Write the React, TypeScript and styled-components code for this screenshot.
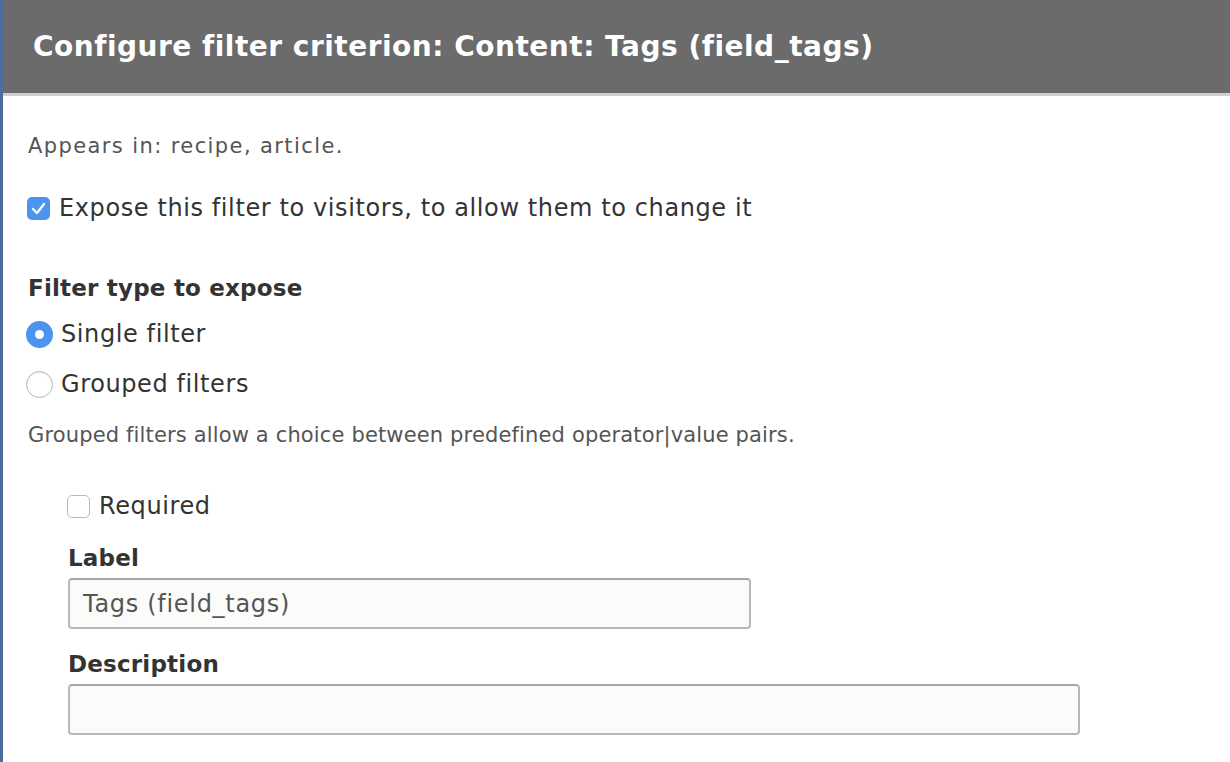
import React from 'react';
import styled, { createGlobalStyle } from 'styled-components';

const GlobalStyle = createGlobalStyle`
  html, body {
    margin: 0;
    padding: 0;
    background: #ffffff;
  }
  body {
    font-family: "DejaVu Sans", Verdana, sans-serif;
    color: #333333;
  }
`;

const Frame = styled.div`
  width: 1230px;
  height: 762px;
  overflow: hidden;
  border-left: 3px solid #4d6d9e;
  box-sizing: border-box;
  background: #ffffff;
`;

const TitleBar = styled.div`
  height: 93px;
  background: #6b6b6b;
  border-bottom: 3px solid #cfcfcf;
  display: flex;
  align-items: center;
  padding-left: 30px;
`;

const Title = styled.h1`
  margin: 0;
  color: #ffffff;
  font-size: 28px;
  font-weight: bold;
  letter-spacing: 0.5px;
`;

const Body = styled.div`
  padding: 36px 0 0 25px;
  display: flex;
  flex-direction: column;
`;

const Note = styled.div<{ $top?: number; $spacing?: number }>`
  font-size: 21px;
  color: #555555;
  letter-spacing: ${p => p.$spacing ?? 0.15}px;
  margin-top: ${p => p.$top ?? 0}px;
  line-height: 28px;
`;

const OptionRow = styled.label<{ $top?: number }>`
  display: flex;
  align-items: center;
  gap: 9px;
  font-size: 24px;
  letter-spacing: 0.6px;
  color: #333333;
  line-height: 30px;
  margin-top: ${p => p.$top ?? 0}px;
`;

const Box = styled.span<{ $checked?: boolean }>`
  width: 23px;
  height: 23px;
  box-sizing: border-box;
  border-radius: 5px;
  display: inline-flex;
  align-items: center;
  justify-content: center;
  background: ${p => (p.$checked ? '#4d93f0' : '#ffffff')};
  border: ${p => (p.$checked ? 'none' : '1.5px solid #b9b9b9')};
  margin-left: -1px;
`;

const Radio = styled.span<{ $checked?: boolean }>`
  width: 27px;
  height: 27px;
  box-sizing: border-box;
  border-radius: 50%;
  display: inline-flex;
  align-items: center;
  justify-content: center;
  margin-left: -2px;
  margin-right: -1px;
  background: ${p => (p.$checked ? '#4d93f0' : '#ffffff')};
  border: ${p => (p.$checked ? 'none' : '1.5px solid #b5b5b5')};
  box-shadow: ${p => (p.$checked ? 'none' : 'inset 0 1px 1px rgba(0,0,0,0.08)')};
  &::after {
    content: '';
    display: ${p => (p.$checked ? 'block' : 'none')};
    width: 9px;
    height: 9px;
    border-radius: 50%;
    background: #ffffff;
  }
`;

const Heading = styled.div<{ $top?: number }>`
  font-size: 23px;
  font-weight: bold;
  letter-spacing: 0.2px;
  color: #333333;
  line-height: 30px;
  margin-top: ${p => p.$top ?? 0}px;
`;

const Indented = styled.div`
  padding-left: 40px;
  margin-top: 42px;
  display: flex;
  flex-direction: column;
`;

const TextInput = styled.div<{ $width: number }>`
  width: ${p => p.$width}px;
  height: 51px;
  box-sizing: border-box;
  border: 2px solid #b8b8b8;
  border-top-color: #a6a6a6;
  border-radius: 4px;
  background: #fbfbfa;
  display: flex;
  align-items: center;
  padding-left: 13px;
  font-size: 24px;
  letter-spacing: 0.7px;
  color: #555555;
  margin-top: 5px;
`;

const Check = () => (
  <svg width="15" height="13" viewBox="0 0 15 13">
    <path d="M2 7 L6 11 L13 2" fill="none" stroke="#ffffff" strokeWidth="2.4" strokeLinecap="round" strokeLinejoin="round" />
  </svg>
);

export default function App() {
  return (
    <>
      <GlobalStyle />
      <Frame>
        <TitleBar>
          <Title>Configure filter criterion: Content: Tags (field_tags)</Title>
        </TitleBar>
        <Body>
          <Note $spacing={1.4}>Appears in: recipe, article.</Note>
          <OptionRow $top={33}>
            <Box $checked><Check /></Box>
            Expose this filter to visitors, to allow them to change it
          </OptionRow>
          <Heading $top={50}>Filter type to expose</Heading>
          <OptionRow $top={16}>
            <Radio $checked />
            Single filter
          </OptionRow>
          <OptionRow $top={20}>
            <Radio />
            Grouped filters
          </OptionRow>
          <Note $top={22}>Grouped filters allow a choice between predefined operator|value pairs.</Note>
          <Indented>
            <OptionRow>
              <Box />
              Required
            </OptionRow>
            <Heading $top={22}>Label</Heading>
            <TextInput $width={683}>Tags (field_tags)</TextInput>
            <Heading $top={20}>Description</Heading>
            <TextInput $width={1012} />
          </Indented>
        </Body>
      </Frame>
    </>
  );
}
